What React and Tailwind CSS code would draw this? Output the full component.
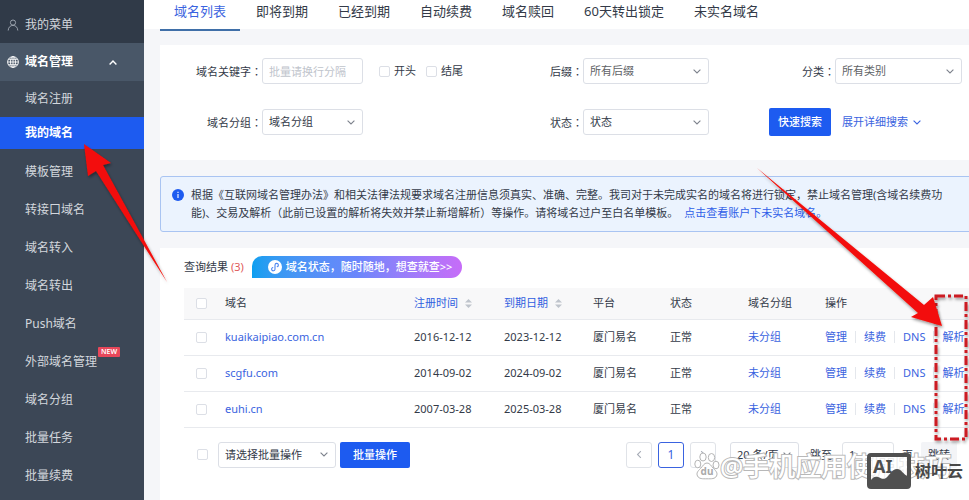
import React from "react";

const menu = ["模板管理", "转接口域名", "域名转入", "域名转出", "Push域名", "外部域名管理", "域名分组", "批量任务", "批量续费"];
const tabs = ["域名列表", "即将到期", "已经到期", "自动续费", "域名赎回", "60天转出锁定", "未实名域名"];
const rows = [
  { domain: "kuaikaipiao.com.cn", from: "2016-12-12", to: "2023-12-12" },
  { domain: "scgfu.com", from: "2014-09-02", to: "2024-09-02" },
  { domain: "euhi.cn", from: "2007-03-28", to: "2025-03-28" },
];
const actions = ["管理", "续费", "DNS", "解析"];

function Chevron({ up, className = "" }) {
  return (
    <svg viewBox="0 0 8 5" className={`h-[5px] w-2 ${className}`} fill="none" stroke="currentColor" strokeWidth={up ? 1.4 : 1.1}>
      <path d={up ? "M.6 4.4 4 1l3.4 3.4" : "M.6.6 4 4 7.4.6"} />
    </svg>
  );
}

function Select({ id, label, value, className = "", muted }) {
  return (
    <div className={`relative flex items-center ${className}`}>
      <select
        id={id}
        aria-label={label}
        className={`h-full w-full appearance-none rounded-[3px] border border-[#dcdfe6] bg-white pl-1.5 leading-4 ${muted ? "text-[#606266]" : "text-[#333a48]"}`}
      >
        <option>{value}</option>
      </select>
      <Chevron className="pointer-events-none absolute right-2 text-[#7d828c]" />
    </div>
  );
}

function Check({ label }) {
  return (
    <input
      type="checkbox"
      aria-label={label}
      className="block size-[11px] shrink-0 appearance-none rounded-[2px] border border-[#dcdfe6] bg-white"
    />
  );
}

function Label({ htmlFor, children }) {
  return (
    <label htmlFor={htmlFor} className="w-[102px] shrink-0 text-right">
      {children}
      <span className="font-['Noto_Sans_CJK_TC',sans-serif]">：</span>
    </label>
  );
}

function SortMark() {
  return (
    <svg viewBox="0 0 7 9" className="h-[9px] w-[7px]" fill="#bfc4cc">
      <path d="M3.5 0 7 3.6H0zM3.5 9 7 5.4H0z" />
    </svg>
  );
}

function Sidebar() {
  return (
    <nav className="w-36 shrink-0 bg-[#3c4756] text-xs text-[#d3d7dd]">
      <a href="#menu" className="flex h-[43px] items-center bg-[#303a48] pt-1.5 pl-[7px] text-[#d3d7dd]">
        <svg viewBox="0 0 12 12" className="mr-1.5 size-3" fill="none" stroke="#9aa2ad">
          <circle cx="6" cy="3.6" r="2.6" />
          <path d="M1.2 11.5C1.4 8.2 3.4 6.4 6 6.4s4.600 1.800 4.800 5.100" />
        </svg>
        我的菜单
      </a>
      <a href="#domains" className="flex h-[38px] items-center bg-[#495768] pl-[7px] font-bold text-white">
        <svg viewBox="0 0 12 12" className="mr-1.5 size-3" fill="none" stroke="#fff" strokeWidth=".9">
          <circle cx="6" cy="6" r="5.400" />
          <ellipse cx="6" cy="6" rx="2.500" ry="5.400" />
          <path d="M6 .6v10.800M.6 6h10.800M1.300 3.300h9.400M1.300 8.700h9.400" />
        </svg>
        域名管理
        <Chevron up className="ml-auto mr-[27px]" />
      </a>
      <a href="#register" className="flex h-9 items-center pl-[25px]">域名注册</a>
      <a href="#mine" className="mb-1 flex h-8 items-center bg-[#1d5bf0] pl-[25px] font-bold text-white">我的域名</a>
      {menu.map((m) => (
        <a key={m} href="#item" className="flex h-[38px] items-center pl-[25px]">
          {m}
          {m === "外部域名管理" && (
            <span className="mb-5 ml-px rounded-[1px] bg-[#e8475a] px-[3px] text-[7px] leading-[10px] font-semibold text-white">NEW</span>
          )}
        </a>
      ))}
    </nav>
  );
}

function Filters() {
  return (
    <form className="grid grid-cols-[321fr_252fr_236fr] gap-y-6 bg-white pt-[13px] pb-6">
      <div className="flex h-[26px] items-center">
        <Label htmlFor="kw">域名关键字</Label>
        <input
          id="kw"
          placeholder="批量请换行分隔"
          className="h-[26px] w-[101px] rounded-[3px] border border-[#dcdfe6] px-1.5 placeholder:text-[#c0c4cc]"
        />
        <label className="ml-4 flex items-center gap-1"><Check label="开头" />开头</label>
        <label className="ml-2.5 flex items-center gap-1"><Check label="结尾" />结尾</label>
      </div>
      <div className="flex items-center">
        <Label htmlFor="suffix">后缀</Label>
        <Select id="suffix" label="后缀" value="所有后缀" muted className="h-[26px] w-[126px]" />
      </div>
      <div className="flex items-center">
        <Label htmlFor="kind">分类</Label>
        <Select id="kind" label="分类" value="所有类别" muted className="h-[26px] w-[127px]" />
      </div>
      <div className="flex h-7 items-center">
        <Label htmlFor="group">域名分组</Label>
        <Select id="group" label="域名分组" value="域名分组" className="h-[26px] w-[101px]" />
      </div>
      <div className="flex items-center">
        <Label htmlFor="state">状态</Label>
        <Select id="state" label="状态" value="状态" className="h-[26px] w-[126px]" />
      </div>
      <div className="flex items-center pl-9">
        <button type="button" className="h-7 w-[62px] rounded-[2px] bg-[#1d5bf0] font-medium text-white">快速搜索</button>
        <a href="#more" className="ml-[11px] flex items-center gap-[5px] text-[#3a63e0]">
          展开详细搜索
          <Chevron />
        </a>
      </div>
    </form>
  );
}

function Notice() {
  return (
    <div className="-mr-2 mt-4 flex h-14 items-center rounded-[3px] border border-[#a9c4f2] bg-[#ebf3fe] pl-[11px]">
      <svg viewBox="0 0 12 12" className="mt-3 size-3 shrink-0 self-start">
        <circle cx="6" cy="6" r="6" fill="#1d5bf0" />
        <path d="M6 5v4M6 2.800v1.200" stroke="#fff" strokeWidth="1.100" />
      </svg>
      <p className="mr-6 ml-[7px] leading-[18px]">
        根据《互联网域名管理办法》和相关法律法规要求域名注册信息须真实、准确、完整。我司对于未完成实名的域名将进行锁定，禁止域名管理(含域名续费功能)、交易及解析（此前已设置的解析将失效并禁止新增解析）等操作。请将域名过户至白名单模板。
        <a href="#unverified" className="ml-1.5 text-[#2f5fe8]">点击查看账户下未实名域名。</a>
      </p>
    </div>
  );
}

function Results() {
  return (
    <section className="mt-4 grow bg-white pt-2 pl-6">
      <div className="flex h-[22px] items-center">
        <h2>查询结果 <span className="text-[#e05a5a]">(3)</span></h2>
        <a
          href="#mini"
          className="ml-2 flex h-[22px] items-center rounded-tl-[10px] rounded-tr-[11px] rounded-br-[11px] bg-linear-to-r from-[#0a9ff0] via-[#6a86fb] to-[#c66cf8] pr-2.5 pl-4 font-medium text-white"
        >
          <svg viewBox="0 0 14 14" className="mr-1 size-3.5">
            <circle cx="7" cy="7" r="7" fill="#fff" />
            <path d="M7 9V5a1.700 1.700 0 1 1 2.200 1.700M7 5v4.200a1.700 1.700 0 1 1-2.200-1.700" fill="none" stroke="#4d86f0" strokeWidth="1.100" strokeLinecap="round" />
          </svg>
          域名状态，随时随地，想查就查&gt;&gt;
        </a>
      </div>
      <table className="mt-2.5 w-full table-fixed border-collapse text-left">
        <colgroup>
          <col className="w-[41px]" />
          <col />
          <col className="w-[90px]" />
          <col className="w-[89px]" />
          <col className="w-[77px]" />
          <col className="w-[78px]" />
          <col className="w-[77px]" />
          <col className="w-36" />
        </colgroup>
        <thead>
          <tr className="h-[31px] border-b border-[#e8eaee] bg-[#f8f8f9] *:p-0 *:font-normal">
            <th className="pl-3!"><Check label="全选" /></th>
            <th>域名</th>
            <th className="text-[#2f5fe0]"><span className="flex items-center gap-[7px]">注册时间<SortMark /></span></th>
            <th className="text-[#2f5fe0]"><span className="flex items-center gap-[7px]">到期日期<SortMark /></span></th>
            <th>平台</th>
            <th>状态</th>
            <th>域名分组</th>
            <th>操作</th>
          </tr>
        </thead>
        <tbody>
          {rows.map((r) => (
            <tr key={r.domain} className="h-9 border-b border-[#e8eaee] *:p-0">
              <td className="pl-3!"><Check label={r.domain} /></td>
              <td><a href="#domain" className="text-[#3a63e0]">{r.domain}</a></td>
              <td>{r.from}</td>
              <td>{r.to}</td>
              <td>厦门易名</td>
              <td>正常</td>
              <td><a href="#group" className="text-[#3a63e0]">未分组</a></td>
              <td>
                <div className="flex items-center gap-2 whitespace-nowrap text-[#3a63e0]">
                  {actions.map((a, i) => (
                    <React.Fragment key={a}>
                      {i > 0 && <span className="h-3 w-px bg-[#e4e7ec]" />}
                      <a href="#action">{a}</a>
                    </React.Fragment>
                  ))}
                </div>
              </td>
            </tr>
          ))}
        </tbody>
      </table>
      <div className="mt-3.5 flex h-[26px] items-center pr-3 pl-[13px]">
        <Check label="选择全部" />
        <Select label="批量操作" value="请选择批量操作" className="ml-2.5 h-[26px] w-[118px]" />
        <button className="ml-1 h-[26px] w-[70px] rounded-[2px] bg-[#1d5bf0] font-medium text-white">批量操作</button>
        <div className="ml-auto flex items-center">
          <button aria-label="上一页" className="flex size-[26px] items-center justify-center rounded-[3px] border border-[#e0e3e8] text-[#a9aeb8]">
            <Chevron className="rotate-90" />
          </button>
          <button className="ml-1.5 size-[26px] rounded-[3px] border border-[#3a63e0] text-xs text-[#3a63e0]">1</button>
          <button aria-label="下一页" className="ml-1.5 flex size-[26px] items-center justify-center rounded-[3px] border border-[#e0e3e8] text-[#a9aeb8]">
            <Chevron className="-rotate-90" />
          </button>
          <Select label="每页条数" value="20 条/页" className="ml-3.5 h-[26px] w-[69px]" />
          <label htmlFor="page" className="mr-2.5 ml-[11px]">跳至</label>
          <input id="page" defaultValue="1" className="h-[26px] w-[52px] rounded-[3px] border border-[#e0e3e8] px-1.5" />
          <span className="mx-2">页</span>
          <button className="h-[26px] w-9 rounded-[2px] bg-[#f3f4f7]">跳转</button>
        </div>
      </div>
    </section>
  );
}

function Annotations() {
  return (
    <svg viewBox="0 0 969 500" className="pointer-events-none absolute top-0 left-0 h-[500px] w-[969px]">
      <defs>
        <filter id="shade" x="-20%" y="-20%" width="140%" height="140%">
          <feDropShadow dx="1" dy="2" stdDeviation="1.500" floodOpacity=".4" />
        </filter>
      </defs>
      <rect x="936" y="296" width="30" height="143" fill="none" stroke="#cc1a22" strokeWidth="3" strokeDasharray="9 3 3 3" filter="url(#shade)" />
      <g fill="#f30d08" filter="url(#shade)">
        <path d="M84 144 111 163 103 165 167 282 96 171 88 176Z" />
        <path d="M942 326 933 297 924 305 757 168 918 313 911 317Z" />
      </g>
    </svg>
  );
}

function Watermark() {
  return (
    <div className="pointer-events-none absolute top-[450px] left-[694px] h-10 w-[275px]">
      <div className="absolute top-0.5 left-0 flex items-center">
        <svg viewBox="0 0 26 28" className="h-7 w-[26px]" fill="#fff" stroke="#b4b4b4">
          <ellipse cx="9" cy="5" rx="3.200" ry="4" />
          <ellipse cx="17.500" cy="5.500" rx="3.200" ry="4" />
          <ellipse cx="3.800" cy="12" rx="3" ry="3.800" />
          <ellipse cx="22" cy="13" rx="3" ry="3.800" />
          <path d="M13 11c-3 0-4 3-6.500 5.500S2 21 3.500 24s5 2.800 9.500 2.800 8 .2 9.500-2.800-.5-5-3-7.500S16 11 13 11Z" />
          <text x="13" y="23" textAnchor="middle" fontSize="10" fontWeight="700" fontFamily="Noto Sans" fill="#aaa" stroke="none">du</text>
        </svg>
        <span className="text-[26px] leading-7 font-medium whitespace-nowrap text-white [-webkit-text-stroke:2px_#b8b8b8] [paint-order:stroke_fill]">@手机应用使用技巧</span>
      </div>
      <div className="absolute top-[3px] left-[173px] flex items-center gap-1">
        <svg viewBox="0 0 44 36" className="h-9 w-11">
          <rect x="2" y="2" width="40" height="32" fill="#fff" fillOpacity=".7" />
          <rect x="2" y="2" width="40" height="32" rx="2" fill="none" stroke="#505050" strokeWidth="4" />
          <path d="M3 34V28c3-4 5-5 8-4 3 1 5 3 8 1 4-3 6-9 11-9 5 0 6 6 11 7v11Z" fill="#505050" />
          <text x="6" y="20" fontSize="18" fontWeight="700" fontFamily="Noto Sans" fill="#505050">AI</text>
        </svg>
        <span className="text-base leading-5 font-bold whitespace-nowrap text-[#484848]">树叶云</span>
      </div>
    </div>
  );
}

export default function App() {
  return (
    <div className="relative flex min-h-screen overflow-hidden bg-[#f5f6f9] font-['Noto_Sans','Noto_Sans_CJK_SC',sans-serif] text-[11px] leading-4 text-[#333a48]">
      <Sidebar />
      <main className="flex min-w-0 grow flex-col">
        <div className="h-[29px] bg-white pl-4">
          <div className="flex gap-0.5 text-[13px]">
            {tabs.map((t, i) => (
              <a
                key={t}
                href="#tab"
                className={`h-[31px] border-b-2 px-3.5 pt-[3px] whitespace-nowrap ${i === 0 ? "border-[#3f6fa8] text-[#3a63e0]" : "border-transparent"}`}
              >
                {t}
              </a>
            ))}
          </div>
        </div>
        <div className="flex grow flex-col pt-4 pl-4">
          <Filters />
          <Notice />
          <Results />
        </div>
      </main>
      <Annotations />
      <Watermark />
    </div>
  );
}
